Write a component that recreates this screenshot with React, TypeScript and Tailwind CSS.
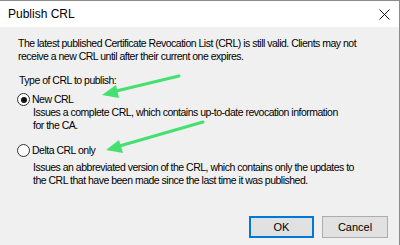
import React from "react";

export default function App() {
  return (
    <div className="relative w-[400px] h-[245px] overflow-hidden bg-[#f0f0f0] border-t border-r border-[#8c8c8c] text-black" style={{ fontFamily: '"Liberation Sans", Arial, sans-serif' }}>
      <div className="h-[26px] bg-white flex items-center justify-between pl-[8px] pr-[9px]">
        <span className="text-[12px] leading-none text-black">Publish CRL</span>
        <svg width="11" height="11" viewBox="0 0 11 11" className="mt-[1px]">
          <path d="M0.5 0.5 L10.5 10.5 M10.5 0.5 L0.5 10.5" stroke="#111" strokeWidth="1" />
        </svg>
      </div>
      <div className="pl-[17px] pr-[10px] pt-[10px] text-[10.5px] tracking-[-0.5px] leading-[13px] whitespace-nowrap">
        <p className="ml-[1px]">The latest published Certificate Revocation List (CRL) is still valid. Clients may not<br />receive a new CRL until after their current one expires.</p>
        <p className="mt-[11px] ml-[2px]">Type of CRL to publish:</p>
        <div className="mt-[6px] flex items-center gap-[2px] h-[13px]">
          <span className="w-[13px] h-[13px] rounded-full border border-[#333] bg-white flex items-center justify-center">
            <span className="w-[6px] h-[6px] rounded-full bg-[#111]" />
          </span>
          <span>New CRL</span>
        </div>
        <p className="ml-[16px]">Issues a complete CRL, which contains up-to-date revocation information<br />for the CA.</p>
        <div className="mt-[12px] flex items-center gap-[2px] h-[13px]">
          <span className="w-[13px] h-[13px] rounded-full border border-[#333] bg-white" />
          <span>Delta CRL only</span>
        </div>
        <p className="ml-[16px] mt-[4px]">Issues an abbreviated version of the CRL, which contains only the updates to<br />the CRL that have been made since the last time it was published.</p>
        <div className="mt-[29px] flex justify-end gap-[8px] pr-[1px] tracking-normal">
          <button className="w-[65px] h-[22px] bg-[#e1e1e1] border border-[#0078d7] outline outline-1 -outline-offset-2 outline-[#0078d7] text-[11px] leading-none">OK</button>
          <button className="w-[66px] h-[22px] bg-[#e1e1e1] border border-[#adadad] text-[11px] leading-none">Cancel</button>
        </div>
      </div>
      <svg className="absolute left-0 top-0 pointer-events-none" width="400" height="245">
        <g stroke="#44e070" strokeWidth="3" strokeLinecap="round" fill="#44e070">
          <line x1="179" y1="75" x2="112" y2="91" />
          <polygon points="102,94 116,84 119,97" stroke="none" />
          <line x1="203" y1="121" x2="116" y2="146" />
          <polygon points="106,149 119,139 123,152" stroke="none" />
        </g>
      </svg>
    </div>
  );
}
